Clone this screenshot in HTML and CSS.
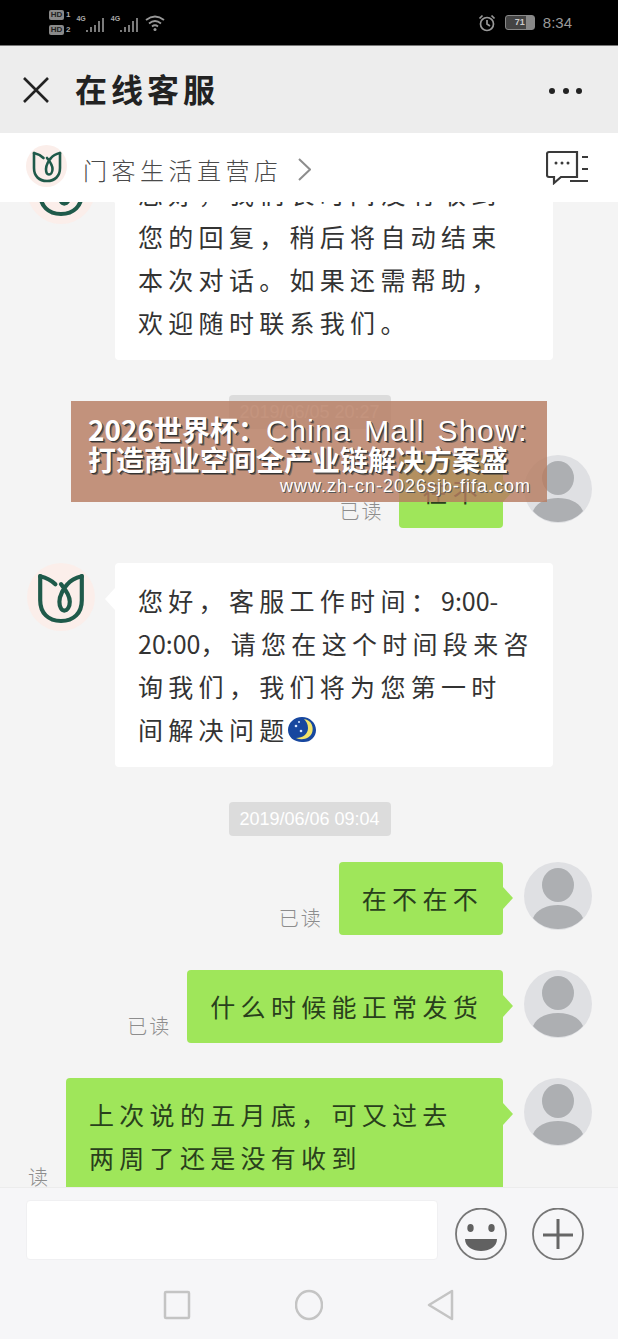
FILE: index.html
```html
<!DOCTYPE html>
<html lang="zh">
<head>
<meta charset="utf-8">
<title>在线客服</title>
<link rel="stylesheet" href="styles.css">
</head>
<body>
<div class="phone">
  <header class="status">
    <div class="status-left">
      <div class="sims">
        <div class="sim"><span class="hd">HD</span><span class="simno">1</span></div>
        <div class="sim"><span class="hd">HD</span><span class="simno">2</span></div>
      </div>
      <div class="signal"><span class="net">4G</span>
        <svg class="bars" viewBox="0 0 18 16"><path d="M1 15v-2M5 15v-5M9 15V8M13 15V4M17 15V1"/></svg></div>
      <div class="signal"><span class="net">4G</span>
        <svg class="bars" viewBox="0 0 18 16"><path d="M1 15v-2M5 15v-5M9 15V8M13 15V4M17 15V1"/></svg></div>
      <svg class="wifi" viewBox="0 0 20 18"><path d="M1 6q9-7 18 0M4 9.500q6-5 12 0M7 12.500q3-2.500 6 0"/><circle cx="10" cy="15.500" r="1.500"/></svg>
    </div>
    <div class="status-right">
      <svg class="alarm" viewBox="0 0 18 18"><circle cx="9" cy="10" r="6.500"/><path d="M9 6v4l3 2M1.500 4.500l3-3M16.500 4.500l-3-3"/></svg>
      <div class="battery"><span class="battery-fill">71</span></div>
      <span class="time">8:34</span>
    </div>
  </header>

  <nav class="titlebar">
    <svg class="close" viewBox="0 0 26 26"><path d="M1 1l24 24M25 1L1 25"/></svg>
    <h1 class="title">在线客服</h1>
    <div class="dots"><i></i><i></i><i></i></div>
  </nav>

  <div class="storebar">
    <div class="store-logo">
      <svg viewBox="0 0 40 40"><use href="#tulip"/></svg>
    </div>
    <span class="store-name">门客生活直营店</span>
    <svg class="chevron" viewBox="0 0 13 23"><path d="M1 1l11 10.500L1 22"/></svg>
    <svg class="store-menu" viewBox="0 0 42 35">
      <path d="M31 2H3a2 2 0 0 0-2 2v21a2 2 0 0 0 2 2h5v6l7-6h16z"/>
      <path d="M36 7h6M36 19h6M24 31h18"/>
      <circle class="fill" cx="10" cy="13" r="1.500"/><circle class="fill" cx="16" cy="13" r="1.500"/><circle class="fill" cx="22" cy="13" r="1.500"/>
    </svg>
  </div>

  <main class="chat">
    <div class="chat-list">
      <div class="row">
        <div class="avatar avatar-shop"><svg viewBox="0 0 40 40"><use href="#tulip"/></svg></div>
        <div class="bubble bubble-in">您好&#xFF0C;我们长时间没有收到<br>您的回复&#xFF0C;稍后将自动结束<br>本次对话&#x3002;如果还需帮助&#xFF0C;<br>欢迎随时联系我们&#x3002;</div>
      </div>

      <div class="stamp-row"><span class="stamp">2019/06/05 20:27</span></div>
      <div class="row row-out">
        <span class="read">已读</span>
        <div class="bubble bubble-out">在不</div>
        <div class="avatar avatar-user"><svg viewBox="0 0 68 68"><use href="#person"/></svg></div>
      </div>

      <div class="row">
        <div class="avatar avatar-shop"><svg viewBox="0 0 40 40"><use href="#tulip"/></svg></div>
        <div class="bubble bubble-in">您好&#xFF0C;客服工作时间&#xFF1A;<span class="latin">9:00-</span><br><span class="latin">20:00</span>&#xFF0C;请您在这个时间段来咨<br>询我们&#xFF0C;我们将为您第一时<br>间解决问题<svg class="moon" viewBox="0 0 30 28"><path class="moon-cloud" d="M15 1C7 1 1 7 1 14c0 7 6 12 14 12 8 1 14-5 14-12S23 1 15 1z"/><path class="moon-crescent" d="M17 3c8 1 10 9 8 14s-9 8-16 5c7 0 12-4 12-10 0-4-2-7-4-9z"/><circle class="moon-star" cx="9" cy="10" r="1.300"/><circle class="moon-star" cx="14" cy="15" r="1.300"/><circle class="moon-star" cx="12" cy="6" r="1"/></svg></div>
      </div>

      <div class="stamp-row"><span class="stamp">2019/06/06 09:04</span></div>
      <div class="row row-out">
        <span class="read">已读</span>
        <div class="bubble bubble-out">在不在不</div>
        <div class="avatar avatar-user"><svg viewBox="0 0 68 68"><use href="#person"/></svg></div>
      </div>

      <div class="row row-out">
        <span class="read">已读</span>
        <div class="bubble bubble-out">什么时候能正常发货</div>
        <div class="avatar avatar-user"><svg viewBox="0 0 68 68"><use href="#person"/></svg></div>
      </div>

      <div class="row row-out">
        <span class="read">读</span>
        <div class="bubble bubble-out bubble-long">上次说的五月底&#xFF0C;可又过去<br>两周了还是没有收到</div>
        <div class="avatar avatar-user"><svg viewBox="0 0 68 68"><use href="#person"/></svg></div>
      </div>
    </div>
  </main>

  <footer class="composer">
    <div class="input"></div>
    <svg class="round-btn" viewBox="0 0 52 52">
      <ellipse class="ring" cx="26" cy="26" rx="25" ry="25.500"/>
      <ellipse class="solid" cx="15.500" cy="20" rx="3.200" ry="4"/><ellipse class="solid" cx="36.500" cy="20" rx="3.200" ry="4"/>
      <path class="solid" d="M10 31h32c0 8-8 12-16 12s-16-4-16-12z"/>
    </svg>
    <svg class="round-btn" viewBox="0 0 52 52">
      <ellipse class="ring" cx="26" cy="26" rx="25" ry="25.500"/>
      <path class="plus" d="M26 11v30M11 27h30"/>
    </svg>
  </footer>

  <div class="softkeys">
    <svg class="key" viewBox="0 0 28 32"><rect x="2" y="3" width="24" height="26" rx="1"/></svg>
    <svg class="key" viewBox="0 0 28 32"><ellipse cx="14" cy="16" rx="13" ry="14"/></svg>
    <svg class="key" viewBox="0 0 28 32"><path d="M25 2v28L2 16z"/></svg>
  </div>

  <aside class="banner">
    <div class="banner-title">2026世界杯&#xFF1A;<span class="banner-latin">China Mall Show:</span></div>
    <div class="banner-title">打造商业空间全产业链解决方案盛</div>
    <div class="banner-url">www.zh-cn-2026sjb-fifa.com</div>
  </aside>
</div>

<svg class="defs" width="0" height="0">
  <defs>
    <g id="tulip" fill="none" stroke="#1f5a4a" stroke-width="2.600" stroke-linejoin="round" stroke-linecap="round">
      <path d="M7 7c4 1 7 2.500 9.500 5M33 7c-4 1-7 2.500-9 5 -2 2-5 7-5 11 0 3.500 1.500 5.500 3 5.500 2 0 3.500-2.500 3.500-5.500 0-4-3-8-5.500-11"/>
      <path d="M7 7v15c0 8 5 13 13 13s13-5 13-13V7"/>
    </g>
    <g id="person">
      <ellipse cx="34" cy="23" rx="16" ry="17" fill="#adafb2"/>
      <path d="M9 56c4-9 14-13 25-13s21 4 25 13c-6 7-15 11-25 11S15 63 9 56z" fill="#adafb2"/>
    </g>
  </defs>
</svg>
</body>
</html>
```

FILE: styles.css
```css
* { box-sizing: border-box; }
html, body { margin: 0; padding: 0; }
body {
  font-family: "Noto Sans CJK SC", "Noto Sans", sans-serif;
  background: #f4f4f4;
  color: #333;
}
.phone {
  position: relative;
  width: 618px;
  height: 1339px;
  display: flex;
  flex-direction: column;
  overflow: hidden;
}
.defs { position: absolute; }

/* status bar */
.status {
  height: 46px;
  flex: none;
  background: #000;
  color: #8f8f8f;
  display: flex;
  justify-content: space-between;
  align-items: center;
  padding: 0 46px 0 49px;
  border-bottom: 1px solid #777;
}
.status-left, .status-right { display: flex; align-items: center; }
.status-left { gap: 4px; }
.sims { display: flex; flex-direction: column; gap: 4px; margin-right: 2px; }
.sim { display: flex; align-items: center; gap: 2px; height: 11px; }
.hd {
  font: bold 8px/10px "Liberation Sans", sans-serif;
  background: #8a8a8a;
  color: #222;
  border-radius: 2px;
  width: 15px;
  text-align: center;
}
.simno { font: bold 8px/10px "Liberation Sans", sans-serif; color: #aaa; }
.signal { display: flex; align-items: flex-end; height: 20px; margin-right: 3px; }
.net { font: bold 7px/8px "Liberation Sans", sans-serif; align-self: flex-start; margin-top: 2px; color: #aaa; }
.bars { width: 18px; height: 16px; fill: none; stroke: #999; stroke-width: 1.600; }
.wifi { width: 20px; height: 18px; fill: none; stroke: #999; stroke-width: 1.800; }
.wifi circle { fill: #999; stroke: none; }
.status-right { gap: 9px; }
.alarm { width: 18px; height: 18px; fill: none; stroke: #999; stroke-width: 1.700; }
.battery {
  width: 30px;
  height: 15px;
  border: 1px solid #888;
  border-radius: 3px;
  display: flex;
  background: linear-gradient(90deg, #444 70%, #888 70%);
}
.battery-fill {
  width: 100%;
  font: bold 9px/13px "Liberation Sans", sans-serif;
  color: #ccc;
  text-align: center;
}
.time { font: 15px/18px "Liberation Sans", sans-serif; color: #999; margin-left: -1px; }

/* title bar */
.titlebar {
  height: 87px;
  flex: none;
  background: #ededed;
  display: flex;
  align-items: center;
  padding: 0 36px 0 23px;
}
.close { width: 26px; height: 26px; fill: none; stroke: #222; stroke-width: 2.600; flex: none; }
.title {
  margin: -4px 0 0 26px;
  font-size: 32px;
  line-height: 40px;
  font-weight: 700;
  letter-spacing: 4px;
  color: #222;
  flex: 1;
}
.dots { display: flex; gap: 7.500px; margin-top: 2px; }
.dots i { width: 6px; height: 6px; border-radius: 50%; background: #222; display: block; }

/* store bar */
.storebar {
  height: 69px;
  flex: none;
  background: #fff;
  display: flex;
  align-items: center;
  padding: 0 30px 0 26px;
  position: relative;
  z-index: 1;
}
.store-logo {
  width: 41px;
  height: 42px;
  margin-bottom: 3px;
  border-radius: 50%;
  background: #fbeeea;
  display: flex;
  align-items: center;
  justify-content: center;
  flex: none;
}
.store-logo svg { width: 40px; height: 40px; flex: none; }
.store-name {
  margin: 4px 0 0 16px;
  font-size: 24px;
  font-weight: 300;
  line-height: 32px;
  letter-spacing: 4.500px;
  color: #4a4a4a;
}
.chevron { width: 13px; height: 23px; fill: none; stroke: #8d8d8d; stroke-width: 2; margin: 4px 0 0 15px; }
.store-menu { width: 42px; height: 35px; margin-left: auto; fill: none; stroke: #3a3a3a; stroke-width: 2.200; }
.store-menu .fill { fill: #3a3a3a; stroke: none; }

/* chat */
.chat {
  flex: 1;
  min-height: 0;
  overflow: hidden;
  background: #f4f4f4;
}
.chat-list {
  margin-top: -46px;
  display: flex;
  flex-direction: column;
  gap: 35px;
  padding: 0 26px 0 27px;
}
.row { display: flex; align-items: flex-start; }
.row-out { justify-content: flex-end; }
.stamp-row { display: flex; justify-content: center; margin-bottom: -9px; }
.stamp {
  height: 34px;
  width: 162px;
  background: #dcdcdc;
  border-radius: 4px;
  color: #fff;
  font-family: "Liberation Sans", sans-serif;
  font-size: 18px;
  line-height: 34px;
  text-align: center;
  white-space: nowrap;
}
.avatar {
  flex: none;
  width: 68px;
  height: 68px;
  border-radius: 50%;
  display: flex;
  align-items: center;
  justify-content: center;
}
.avatar-shop { background: #fbeeea; }
.avatar-shop svg { width: 64px; height: 64px; flex: none; }
.avatar-user { background: #dfe0e3; overflow: hidden; }
.avatar-user svg { width: 68px; height: 68px; }

.bubble {
  position: relative;
  font-size: 25px;
  font-weight: 400;
  line-height: 43px;
  letter-spacing: 5.300px;
  border-radius: 4px;
  white-space: nowrap;
}
.bubble::after {
  content: "";
  position: absolute;
  top: 25px;
  width: 0;
  height: 0;
  border-top: 11px solid transparent;
  border-bottom: 11px solid transparent;
}
.bubble-in {
  background: #fff;
  margin-left: 20px;
  width: 438px;
  padding: 16px 10px 16px 23px;
  color: #333;
}
.bubble-in::after { left: -10px; border-right: 10px solid #fff; }
.bubble-out {
  background: #9fe65a;
  margin-right: 21px;
  padding: 15px 20px 15px 23px;
  color: #29401c;
}
.bubble-out::after { right: -10px; border-left: 10px solid #9fe65a; }
.bubble-long { width: 437px; }
.latin { letter-spacing: 0; }
.read {
  align-self: flex-end;
  margin: 0 16px 3px 0;
  font-size: 20px;
  font-weight: 300;
  line-height: 28px;
  letter-spacing: 2px;
  color: #8d8d8d;
  white-space: nowrap;
}
.moon { width: 30px; height: 28px; vertical-align: 2px; margin: -6px 0 -6px -3px; }
.moon-cloud { fill: #17479f; }
.moon-crescent { fill: #f1e36a; }
.moon-star { fill: #d7e6ff; }

/* composer */
.composer {
  height: 89px;
  flex: none;
  background: #f6f6f8;
  border-top: 1px solid #ececec;
  display: flex;
  align-items: flex-start;
  padding: 12px 34px 0 26px;
}
.input {
  width: 412px;
  height: 60px;
  background: #fff;
  border-radius: 4px;
  border: 1px solid #f0f0f2;
  margin-right: 17px;
}
.round-btn { width: 52px; height: 52px; margin-top: 8px; margin-right: 25px; flex: none; }
.round-btn:last-child { margin-right: 0; }
.ring { fill: none; stroke: #777; stroke-width: 1.800; }
.solid { fill: #616161; }
.plus { fill: none; stroke: #666; stroke-width: 3; }

/* android keys */
.softkeys {
  height: 63px;
  flex: none;
  background: #f6f6f8;
  display: flex;
  align-items: flex-start;
  gap: 104px;
  padding: 13px 0 0 163px;
}
.key { width: 28px; height: 32px; fill: none; stroke: #c4c4c4; stroke-width: 2.500; stroke-linejoin: round; flex: none; }

/* overlay banner */
.banner {
  position: absolute;
  left: 71px;
  top: 401px;
  width: 476px;
  height: 101px;
  padding: 14px 0 0 17px;
  background: rgba(183, 124, 98, 0.82);
  color: #fff;
}
.banner-title {
  font-size: 28px;
  font-weight: 700;
  line-height: 29px;
  white-space: nowrap;
  text-shadow: 1px 1px 0 #333, 2px 2px 0 rgba(50, 50, 50, .5);
}
.banner-latin {
  font-family: "Liberation Sans", sans-serif;
  font-weight: 400;
  font-size: 30px;
  letter-spacing: 1.400px;
  word-spacing: 3px;
}
.banner-url {
  margin: 2px 0 0 192px;
  font-family: "Liberation Sans", sans-serif;
  font-size: 18px;
  line-height: 20px;
  letter-spacing: 1px;
  white-space: nowrap;
  text-shadow: 1px 1px 0 #555;
}
```
